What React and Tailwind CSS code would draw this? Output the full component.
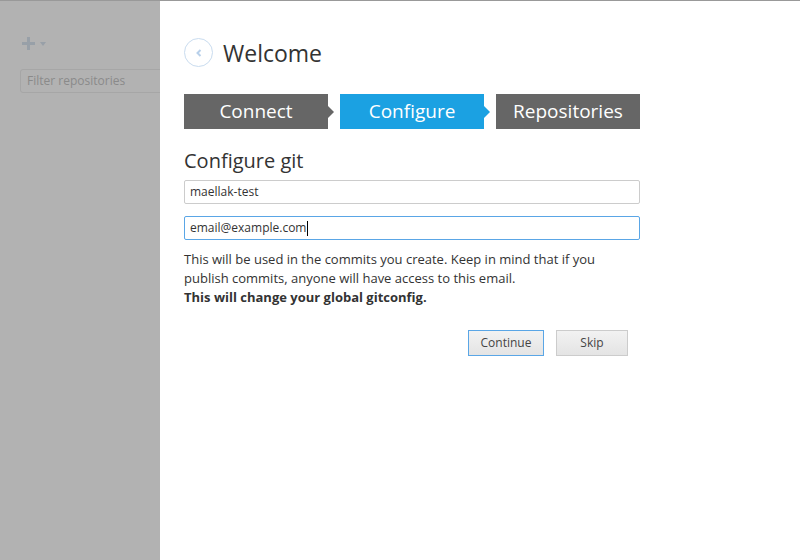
import React from "react";

const font = { fontFamily: '"Open Sans", "Noto Sans", sans-serif' };

function Step({ label, active, arrow }) {
  return (
    <div className="relative flex items-center">
      <div
        className={`flex h-[35px] w-[144px] items-center justify-center text-[19px] text-white ${
          active ? "bg-[#1ba1e2]" : "bg-[#666666]"
        }`}
      >
        {label}
      </div>
      {arrow && (
        <div
          className={`h-0 w-0 border-y-[6px] border-l-[6px] border-y-transparent ${
            active ? "border-l-[#1ba1e2]" : "border-l-[#666666]"
          }`}
        />
      )}
    </div>
  );
}

export default function App() {
  return (
    <div className="flex h-[560px] w-[800px] flex-col overflow-hidden bg-white" style={font}>
      <div className="h-px w-full bg-[#999999]" />
      <div className="flex flex-1">
        <aside className="w-[160px] shrink-0 overflow-hidden bg-[#b2b2b2] pt-[36px]">
          <div className="flex items-center pl-[22px] text-[#98a0a8]">
            <svg width="13" height="13" viewBox="0 0 13 13">
              <rect x="5" y="0" width="3" height="13" fill="#98a0a8" />
              <rect x="0" y="5" width="13" height="3" fill="#98a0a8" />
            </svg>
            <svg width="6" height="4" viewBox="0 0 6 4" className="ml-[5px]">
              <path d="M0 0 L6 0 L3 4 Z" fill="#98a0a8" />
            </svg>
          </div>
          <div className="ml-[20px] mt-[19px] flex h-[24px] w-[160px] items-center rounded-[3px] border border-[#a6a6a6] pl-[6px] text-[12px] text-[#8a8a8a]">
            Filter repositories
          </div>
        </aside>
        <main className="flex-1 pl-[24px] pt-[37px]">
          <div className="flex items-center">
            <div className="flex h-[29px] w-[29px] items-center justify-center rounded-full border border-[#c9dcef]">
              <svg width="6" height="8" viewBox="0 0 6 8">
                <path d="M4.5 1 L1.5 4 L4.5 7" stroke="#b8d0ea" strokeWidth="2" fill="none" />
              </svg>
            </div>
            <div className="ml-[10px] text-[23px] leading-[28px] text-[#333333]">Welcome</div>
          </div>
          <div className="mt-[27px] flex items-center">
            <Step label="Connect" arrow />
            <div className="w-[6px]" />
            <Step label="Configure" active arrow />
            <div className="w-[6px]" />
            <Step label="Repositories" />
          </div>
          <div className="w-[456px]">
            <div className="mt-[20px] text-[20px] leading-[24px] text-[#333333]">Configure git</div>
            <div className="mt-[7px] flex h-[24px] items-center rounded-[2px] border border-[#cccccc] pl-[5px] text-[12px] text-[#333333]">
              maellak-test
            </div>
            <div className="mt-[12px] flex h-[24px] items-center rounded-[2px] border border-[#5aa6e6] pl-[5px] text-[12px] text-[#333333]">
              email@example.com
              <span className="ml-px inline-block h-[15px] w-px bg-black" />
            </div>
            <p className="mt-[10px] text-[13px] leading-[19px] text-[#333333]">
              This will be used in the commits you create. Keep in mind that if you publish commits, anyone will have access to this email.
              <br />
              <span className="font-bold">This will change your global gitconfig.</span>
            </p>
            <div className="mt-[23px] flex justify-end pr-[12px]">
              <button className="h-[26px] w-[76px] border border-[#5aa6e6] bg-gradient-to-b from-[#f2f2f2] to-[#e4e4e4] text-[12px] text-[#444444]">
                Continue
              </button>
              <button className="ml-[12px] h-[26px] w-[72px] border border-[#cccccc] bg-gradient-to-b from-[#f2f2f2] to-[#e4e4e4] text-[12px] text-[#444444]">
                Skip
              </button>
            </div>
          </div>
        </main>
      </div>
    </div>
  );
}
